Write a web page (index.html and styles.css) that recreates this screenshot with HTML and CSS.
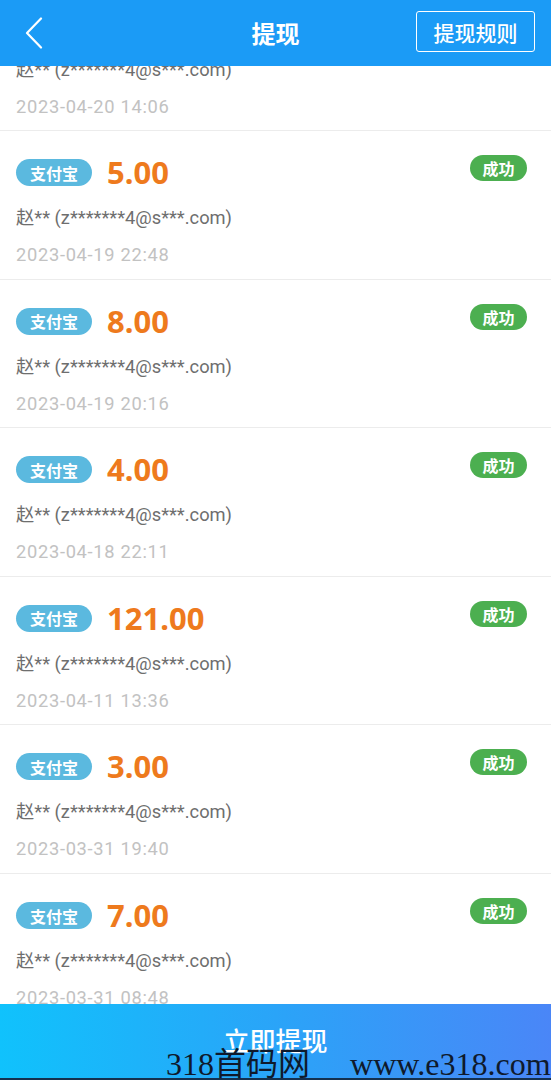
FILE: index.html
```html
<!DOCTYPE html>
<html lang="zh">
<head>
<meta charset="utf-8">
<title>提现</title>
<link rel="stylesheet" href="styles.css">
</head>
<body>
<div class="page">
  <header class="topbar">
    <span class="back">
      <svg width="20" height="32" viewBox="0 0 20 32"><path d="M17 1.5 L3 16 L17 30.5" fill="none" stroke="#fff" stroke-width="2.2" stroke-linecap="round" stroke-linejoin="round"/></svg>
    </span>
    <h1 class="title">提现</h1>
    <span class="rules">提现规则</span>
  </header>

  <main class="viewport">
    <ul class="list">
      <li class="item">
        <div class="row"><span class="tag">支付宝</span><span class="amount">5.00</span><span class="status">成功</span></div>
        <div class="name">赵** (z*******4@s***.com)</div>
        <div class="date">2023-04-20 14:06</div>
      </li>
      <li class="item">
        <div class="row"><span class="tag">支付宝</span><span class="amount">5.00</span><span class="status">成功</span></div>
        <div class="name">赵** (z*******4@s***.com)</div>
        <div class="date">2023-04-19 22:48</div>
      </li>
      <li class="item">
        <div class="row"><span class="tag">支付宝</span><span class="amount">8.00</span><span class="status">成功</span></div>
        <div class="name">赵** (z*******4@s***.com)</div>
        <div class="date">2023-04-19 20:16</div>
      </li>
      <li class="item">
        <div class="row"><span class="tag">支付宝</span><span class="amount">4.00</span><span class="status">成功</span></div>
        <div class="name">赵** (z*******4@s***.com)</div>
        <div class="date">2023-04-18 22:11</div>
      </li>
      <li class="item">
        <div class="row"><span class="tag">支付宝</span><span class="amount">121.00</span><span class="status">成功</span></div>
        <div class="name">赵** (z*******4@s***.com)</div>
        <div class="date">2023-04-11 13:36</div>
      </li>
      <li class="item">
        <div class="row"><span class="tag">支付宝</span><span class="amount">3.00</span><span class="status">成功</span></div>
        <div class="name">赵** (z*******4@s***.com)</div>
        <div class="date">2023-03-31 19:40</div>
      </li>
      <li class="item">
        <div class="row"><span class="tag">支付宝</span><span class="amount">7.00</span><span class="status">成功</span></div>
        <div class="name">赵** (z*******4@s***.com)</div>
        <div class="date">2023-03-31 08:48</div>
      </li>
    </ul>
  </main>

  <footer class="action">
    <span class="action-label">立即提现</span>
    <div class="watermark"><span class="wm-a">318首码网</span><span class="wm-b">www.e318.com</span></div>
  </footer>
</div>
</body>
</html>
```

FILE: styles.css
```css
* { box-sizing: border-box; }
html, body { margin: 0; padding: 0; background: #fff; }
body { font-family: "Noto Sans", "Noto Sans CJK SC", sans-serif; }

.page {
  width: 551px;
  height: 1080px;
  display: flex;
  flex-direction: column;
  overflow: hidden;
}

.topbar {
  height: 66px;
  flex: none;
  background: #1b9bf6;
  display: grid;
  grid-template-columns: 1fr auto 1fr;
  align-items: center;
  padding: 0 16px;
  color: #fff;
}
.back { width: 20px; height: 32px; display: flex; justify-self: start; margin-left: 8px; }
.title {
  margin: 0;
  font-family: "Noto Sans CJK SC", sans-serif;
  font-size: 24px;
  font-weight: 700;
  line-height: 1;
}
.rules {
  justify-self: end;
  width: 119px;
  height: 41px;
  border: 1.5px solid #fff;
  border-radius: 3px;
  display: flex;
  align-items: center;
  justify-content: center;
  font-family: "Noto Sans CJK SC", sans-serif;
  font-size: 21px;
  font-weight: 500;
  margin-top: -3px;
}

.viewport {
  flex: 1;
  overflow: hidden;
}
.list {
  list-style: none;
  margin: -83.5px 0 0 0;
  padding: 0;
}
.item {
  height: 148.6px;
  border-bottom: 1px solid #ececec;
  padding: 24px 24px 0 16px;
}
.row {
  height: 34px;
  display: flex;
  align-items: center;
}
.tag {
  width: 76px;
  height: 27px;
  border-radius: 14px;
  background: #5bb9df;
  color: #fff;
  font-family: "Noto Sans CJK SC", sans-serif;
  font-weight: 700;
  font-size: 16px;
  display: flex;
  align-items: center;
  justify-content: center;
  margin-top: 1px;
}
.amount {
  margin-left: 15px;
  font-family: "Noto Sans", sans-serif;
  font-weight: 700;
  font-size: 31px;
  line-height: 34px;
  color: #ee7a1d;
}
.status {
  margin-left: auto;
  align-self: flex-start;
  width: 57px;
  height: 26px;
  border-radius: 13px;
  background: #4caf50;
  color: #fff;
  font-family: "Noto Sans CJK SC", sans-serif;
  font-weight: 700;
  font-size: 16px;
  display: flex;
  align-items: center;
  justify-content: center;
}
.name {
  margin-top: 16px;
  font-family: "Roboto", "Noto Sans CJK SC", sans-serif;
  font-size: 18.3px;
  line-height: 26px;
  color: #6e6e6e;
}
.date {
  margin-top: 11px;
  font-family: "Roboto", sans-serif;
  font-size: 18.3px;
  line-height: 26px;
  color: #c2c2c2;
  letter-spacing: 0.7px;
}

.action {
  position: relative;
  height: 76px;
  flex: none;
  background: linear-gradient(90deg, #10c2fc 0%, #2aa4f8 50%, #4a86f7 100%);
  display: flex;
  justify-content: center;
  padding-top: 19px;
  border-bottom: 2px solid #14304e;
}
.action-label {
  color: #fff;
  font-family: "Noto Sans CJK SC", sans-serif;
  font-size: 26px;
  font-weight: 500;
  line-height: 34px;
}
.watermark {
  position: absolute;
  left: 166px;
  bottom: -6px;
  display: flex;
  gap: 40px;
  white-space: nowrap;
  font-family: "Liberation Serif", "Noto Sans CJK SC", serif;
  font-size: 32px;
  line-height: 40px;
  color: #0f1a2c;
}
```
